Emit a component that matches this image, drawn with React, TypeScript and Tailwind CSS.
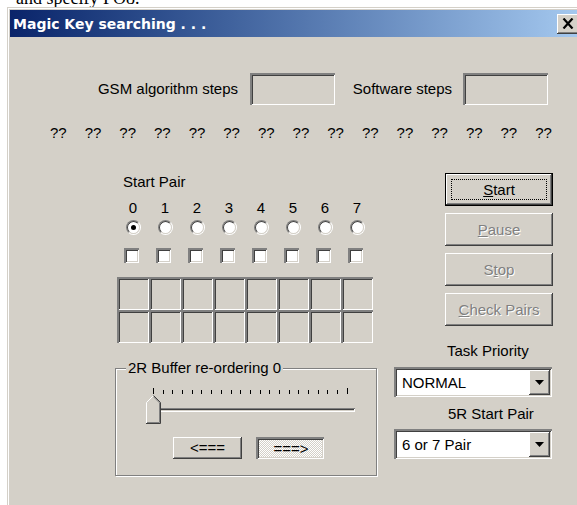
import React from "react";

// classic 3D edges
const raised =
  "shadow-[inset_-1px_-1px_#404040,inset_1px_1px_#ffffff,inset_-2px_-2px_#808080,inset_2px_2px_#d4d0c8]";
const sunken =
  "shadow-[inset_2px_2px_#808080,inset_-1px_-1px_#ffffff,inset_3px_3px_#404040,inset_-2px_-2px_#d4d0c8]";

const cols = [0, 1, 2, 3, 4, 5, 6, 7];
const pairs = Array.from({ length: 15 }, (_, i) => i);
const ticks = Array.from({ length: 21 }, (_, i) => i);
const cells = Array.from({ length: 16 }, (_, i) => i);

function Radio({ checked }: { checked?: boolean }) {
  return (
    <div className="h-[15px] w-[15px] rounded-full border border-b-white border-l-[#808080] border-r-white border-t-[#808080]">
      <div className="flex h-full w-full items-center justify-center rounded-full border border-b-[#d4d0c8] border-l-[#404040] border-r-[#d4d0c8] border-t-[#404040] bg-white">
        {checked && <div className="h-[5px] w-[5px] rounded-full bg-black" />}
      </div>
    </div>
  );
}

function Check() {
  return <div className={`-ml-[3px] h-[15px] w-[15px] bg-white ${sunken}`} />;
}

function Thumb() {
  return (
    <svg width="15" height="29" viewBox="0 0 15 29" className="absolute left-0 top-0">
      <polygon points="7.5,0 15,7.5 15,29 0,29 0,7.5" fill="#d4d0c8" />
      <polyline points="0.5,28.5 0.5,7.5 7.5,0.5" fill="none" stroke="#ffffff" />
      <polyline points="7.5,0.5 14.5,7.5 14.5,28.5 0,28.5" fill="none" stroke="#404040" />
      <polyline points="7.5,1.8 13.5,7.9 13.5,27.5 1,27.5" fill="none" stroke="#808080" />
    </svg>
  );
}

interface PushButtonProps {
  children: React.ReactNode;
  disabled?: boolean;
  focused?: boolean;
}

function PushButton({ children, disabled, focused }: PushButtonProps) {
  const text = disabled ? "text-[#808080] [text-shadow:1px_1px_0_#ffffff]" : "text-black";
  if (focused) {
    return (
      <div className="ml-[51px] h-[33px] w-[108px] border border-black">
        <div className={`h-full w-full bg-[#d4d0c8] p-[5px] ${raised}`}>
          <div className="flex h-full w-full items-center justify-center border border-dotted border-black">
            {children}
          </div>
        </div>
      </div>
    );
  }
  return (
    <div
      className={`ml-[51px] mt-[7px] flex h-[33px] w-[108px] items-center justify-center bg-[#d4d0c8] ${raised} ${text}`}
    >
      {children}
    </div>
  );
}

function Dropdown({ value }: { value: string }) {
  return (
    <div className={`flex h-[30px] w-[158px] items-center bg-white p-[2px] pl-[3px] pt-[3px] ${sunken}`}>
      <span className="flex-1 pl-[5px]">{value}</span>
      <div className={`flex h-full w-[21px] items-center justify-center bg-[#d4d0c8] ${raised}`}>
        <svg width="9" height="5" viewBox="0 0 9 5">
          <polygon points="0,0 9,0 4.5,5" fill="#000000" />
        </svg>
      </div>
    </div>
  );
}

export default function App() {
  return (
    <div className="h-[505px] w-[577px] overflow-hidden bg-white font-['Liberation_Sans',Arial,sans-serif] text-[15px] leading-[18px] text-black">
      <div className="flex h-[7px] items-end overflow-hidden pl-[16px]">
        <span className="shrink-0 whitespace-nowrap font-['Liberation_Serif',serif] text-[18px] leading-[18px]">
          and specify PO8.
        </span>
      </div>

      <div className="ml-[7px] w-[600px] border-l border-t border-[#d4d0c8]">
        <div className="border-l border-t border-white">
          <div className="border-l border-t border-[#d4d0c8]">
            {/* caption */}
            <div className="flex h-[27px] w-[573px] items-center justify-between bg-linear-to-r from-[#0a246a] to-[#a6caf0] pl-[3px] pr-[4px]">
              <span className="font-['DejaVu_Sans',sans-serif] text-[14px] font-bold text-white">
                Magic Key searching . . .
              </span>
              <div className={`flex h-[20px] w-[22px] items-center justify-center bg-[#d4d0c8] ${raised}`}>
                <svg width="12" height="11" viewBox="0 0 12 11">
                  <path d="M1.5 0.5 L10.5 10.5 M10.5 0.5 L1.5 10.5" stroke="#000000" strokeWidth="2.2" />
                </svg>
              </div>
            </div>

            <div className="h-[470px] w-[573px] bg-[#d4d0c8]">
              <div className="flex items-center pt-[36px]">
                <span className="w-[240px] pr-[12px] text-right">GSM algorithm steps</span>
                <div className={`h-[32px] w-[85px] ${sunken}`} />
                <span className="w-[128px] pr-[11px] text-right">Software steps</span>
                <div className={`h-[32px] w-[85px] ${sunken}`} />
              </div>

              <div className="ml-[40px] mt-[19px] flex w-[502px] justify-between">
                {pairs.map((p) => (
                  <span key={p}>??</span>
                ))}
              </div>

              <div className="mt-[31px] flex">
                {/* pair selection */}
                <div className="ml-[107px] w-[256px]">
                  <div className="ml-[6px] h-[18px]">Start Pair</div>
                  <div className="mt-[8px] flex">
                    {cols.map((n) => (
                      <div key={n} className="w-[32px] text-center">
                        {n}
                      </div>
                    ))}
                  </div>
                  <div className="mt-[3px] flex">
                    {cols.map((n) => (
                      <div key={n} className="flex w-[32px] justify-center">
                        <Radio checked={n === 0} />
                      </div>
                    ))}
                  </div>
                  <div className="mt-[13px] flex">
                    {cols.map((n) => (
                      <div key={n} className="flex w-[32px] justify-center">
                        <Check />
                      </div>
                    ))}
                  </div>
                  <div className="mt-[14px] grid grid-cols-8">
                    {cells.map((c) => (
                      <div key={c} className={`h-[33px] ${sunken}`} />
                    ))}
                  </div>

                  <div className="relative -ml-[2px] mt-[25px] h-[108px] w-[262px] border border-[#808080] shadow-[inset_1px_1px_#ffffff,1px_1px_#ffffff]">
                    <span className="absolute -top-[10px] left-[10px] bg-[#d4d0c8] px-[2px]">
                      2R Buffer re-ordering 0
                    </span>
                    <div className="ml-[37px] mt-[18px] flex h-[7px] w-[195px] items-end justify-between">
                      {ticks.map((t) => (
                        <div
                          key={t}
                          className={`w-px bg-black ${t === 0 || t === 20 ? "h-[6px]" : "h-[4px]"}`}
                        />
                      ))}
                    </div>
                    <div className="relative ml-[30px] mt-[1px] h-[29px] w-[224px] pt-[13px]">
                      <div className="ml-[1px] h-[4px] w-[208px] bg-[#d4d0c8] shadow-[inset_1px_1px_#808080,inset_-1px_-1px_#ffffff,inset_2px_2px_#404040,inset_-2px_-2px_#d4d0c8]" />
                      <Thumb />
                    </div>
                    <div className="ml-[57px] mt-[13px] flex gap-[14px]">
                      <div className={`flex h-[22px] w-[69px] items-center justify-center ${raised}`}>
                        &lt;===
                      </div>
                      <div
                        className={`flex h-[22px] w-[68px] items-center justify-center bg-[image:repeating-conic-gradient(#ffffff_0_25%,#d4d0c8_0_50%)] bg-size-[2px_2px] pl-[2px] pt-[2px] ${sunken}`}
                      >
                        ===&gt;
                      </div>
                    </div>
                  </div>
                </div>

                {/* commands */}
                <div className="ml-[21px] w-[158px]">
                  <PushButton focused>
                    <span>
                      <span className="underline">S</span>tart
                    </span>
                  </PushButton>
                  <PushButton disabled>
                    <span>
                      <span className="underline">P</span>ause
                    </span>
                  </PushButton>
                  <PushButton disabled>
                    <span>
                      S<span className="underline">t</span>op
                    </span>
                  </PushButton>
                  <PushButton disabled>
                    <span>
                      <span className="underline">C</span>heck Pairs
                    </span>
                  </PushButton>

                  <div className="ml-[53px] mt-[16px] h-[18px]">Task Priority</div>
                  <div className="mt-[7px]">
                    <Dropdown value="NORMAL" />
                  </div>
                  <div className="ml-[54px] mt-[8px] h-[18px]">5R Start Pair</div>
                  <div className="mt-[6px]">
                    <Dropdown value="6 or 7 Pair" />
                  </div>
                </div>
              </div>
            </div>
          </div>
        </div>
      </div>
    </div>
  );
}
